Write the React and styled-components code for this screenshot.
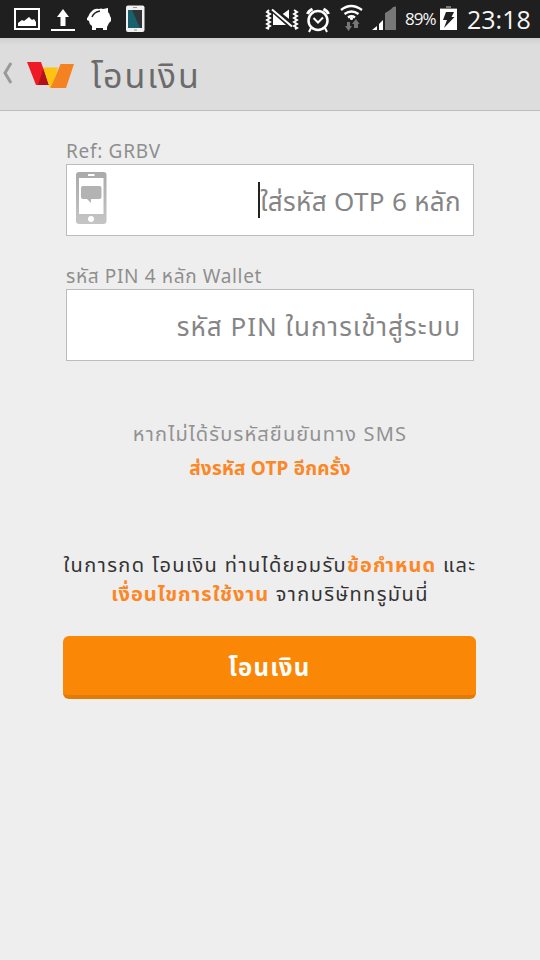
import React from "react";
import styled, { createGlobalStyle } from "styled-components";

const Global = createGlobalStyle`
  * { box-sizing: border-box; }
  html, body { margin: 0; padding: 0; background: #eeeeee; }
  body { font-family: "Noto Sans", "Noto Sans Thai", "Liberation Sans", sans-serif; }
`;

const Screen = styled.div`
  width: 540px;
  height: 960px;
  overflow: hidden;
  display: flex;
  flex-direction: column;
  background: #eeeeee;
`;

const StatusBar = styled.header`
  height: 38px;
  flex: none;
  display: flex;
  justify-content: space-between;
  background: #1f1f1f;
`;

const Drawing = styled.svg`
  display: block;
  flex: none;
`;

const StatusInfo = styled.div`
  display: flex;
  align-items: center;
  height: 38px;
`;

const StatusText = styled.span`
  display: block;
  flex: none;
  width: ${(p) => p.$width}px;
  margin: 0 ${(p) => p.$after}px 0 ${(p) => p.$before}px;
  color: #f6f6f6;
  font-family: "Open Sans", "Noto Sans", sans-serif;
  font-size: ${(p) => p.$size}px;
  line-height: ${(p) => p.$line || 38}px;
  letter-spacing: ${(p) => p.$spacing}px;
  white-space: nowrap;
`;

const ActionBar = styled.nav`
  height: 73px;
  flex: none;
  display: flex;
  align-items: flex-start;
  background: linear-gradient(#cfcfcf 0, #dddddd 7px, #dddddd 100%);
  border-bottom: 1px solid #bdbdbd;
`;

const Title = styled.h1`
  margin: 0 0 0 11px;
  color: #6b6b6b;
  font-size: 34px;
  font-weight: 400;
  line-height: 75px;
  letter-spacing: 1.9px;
  white-space: nowrap;
`;

const Form = styled.main`
  display: flex;
  flex-direction: column;
  width: 408px;
  margin: 27px 0 0 66px;
`;

const Label = styled.label`
  height: 26px;
  color: #8e8e8e;
  font-size: 19px;
  line-height: 26px;
  letter-spacing: ${(p) => p.$spacing || 0}px;
  white-space: nowrap;
`;

const Field = styled.div`
  height: 72px;
  margin-bottom: 27px;
  padding: 0 12px 0 9px;
  display: flex;
  align-items: flex-start;
  background: #ffffff;
  border: 1px solid #bcbcbc;
`;

const FieldIcon = styled.div`
  margin-top: 7px;
`;

const Placeholder = styled.span`
  height: 36px;
  margin: 17px 0 0 auto;
  color: #858585;
  font-size: 26px;
  line-height: 38px;
  letter-spacing: ${(p) => p.$spacing || 0}px;
  white-space: nowrap;
  border-left: ${(p) => (p.$caret ? "2px solid #222222" : "0")};
`;

const Message = styled.p`
  margin: ${(p) => p.$top || 0}px 0 0;
  color: ${(p) => p.$color || "#929292"};
  font-size: ${(p) => (p.$bold ? 19 : 20)}px;
  font-weight: ${(p) => (p.$bold ? 700 : 400)};
  line-height: 34px;
  letter-spacing: ${(p) => p.$spacing || 0}px;
  text-align: center;
  white-space: nowrap;
`;

const Terms = styled.p`
  margin: 65px -10px 0;
  color: #333333;
  font-size: 20px;
  line-height: 29px;
  letter-spacing: 1.4px;
  text-align: center;
  white-space: nowrap;
`;

const Link = styled.a`
  color: #fb8726;
  font-weight: 700;
  letter-spacing: 1.05px;
`;

const Submit = styled.button`
  width: 413px;
  height: 63px;
  margin: 28px 0 0 -3px;
  padding: 2px 0 0;
  border: 0;
  border-bottom: 4px solid #e27b05;
  border-radius: 6px;
  background: #fa8806;
  color: #ffffff;
  font: 700 24px/57px "Noto Sans", "Noto Sans Thai", sans-serif;
  letter-spacing: 1.2px;
`;

const Notifications = () => (
  <Drawing width="150" height="38" viewBox="0 0 150 38">
    <rect x="15" y="9" width="24" height="20" fill="none" stroke="#fff" strokeWidth="2" />
    <path d="M18 26v-3l4-3 2 1 5-4 3 3 2-1 2 3v4z" fill="#fff" />
    <path d="M63 9l6 8h-3.500v9h-5v-9H57zM51 29h24v2H51z" fill="#fff" />
    <path d="M93 10q3-2 6-1 2-1 4 0l5-1v4q2 2 2 4l1 2v3l-2 2-2 4v3h-4v-2h-7v2h-4v-4q-3-2-3-5l-2-1v-2l1-1q1-4 5-7z" fill="#fff" />
    <path d="M92 17q2-5 8-6" fill="none" stroke="#222" strokeWidth="1.500" />
    <rect x="126" y="5.500" width="18.500" height="26.500" rx="2" fill="#f1f1f1" />
    <path d="M128 10h14v18h-14z" fill="#303437" />
    <path d="M128 10h4l8 18h-12z" fill="#17616f" />
    <path d="M133 7.500h4M134 30h3" stroke="#999" />
  </Drawing>
);

const Signals = () => (
  <Drawing width="140" height="38" viewBox="260 0 140 38">
    <path d="M273 13.500l13 11.500h-13zM282 14.500l7-5v16z" fill="#fff" />
    <path d="M273 9.500l19 15" stroke="#1f1f1f" strokeWidth="5" />
    <g fill="none" stroke="#fff" strokeWidth="2">
      <path d="M269 10l-2 2 3 2-3 2 3 2-3 2 3 2-3 2 3 2-3 2 2 1M294 10l3 2-3 2 3 2-3 2 3 2-3 2 3 2-3 2 3 2-2 1" />
      <path d="M272 9.500l20 17" />
      <circle cx="318" cy="20.500" r="9.500" strokeWidth="2.500" />
      <path d="M313.500 18l4.500 4.500 5-5M311 28l-2 4M325 28l2 4" />
      <path d="M307.500 14q1-3 5-5M323.500 9q4 2 5 5" strokeWidth="3" />
      <path d="M341 10q10-8 21 0M344.500 14q7-5 14 0M348 17.500q3.500-2.500 7 0" strokeWidth="2.300" />
    </g>
    <circle cx="351.500" cy="18.500" r="1.600" fill="#fff" />
    <path d="M347 22h3v4h2l-3.500 5-3.500-5h2zM354 28v-4h-2l4-5 3.500 5H358v4z" fill="#777" />
    <path d="M372 30l5-4v4zM379 24l4-4v10h-4z" fill="#fff" />
    <path d="M385 18V13q7-4 8-6l3-.5V30h-11z" fill="#777" />
  </Drawing>
);

const Battery = () => (
  <Drawing width="17" height="38" viewBox="440 0 17 38">
    <path d="M440 8h17v22h-17z" fill="#fff" />
    <path d="M446 6h5v2h6v1h-17V8h6z" fill="#777" />
    <path d="M446 12h8l-2.500 5h3L444 28l3-8h-4z" fill="#1f1f1f" />
  </Drawing>
);

const Brand = () => (
  <Drawing width="80" height="72" viewBox="0 38 80 72">
    <path d="M11 63L5 73L11 83" fill="none" stroke="#999" strokeWidth="3" />
    <path d="M27 62h14l8 23H36z" fill="#ed1c24" />
    <path d="M43.500 68l5 17H38z" fill="#b1121a" />
    <path d="M43 67.500h15L52 88h-2z" fill="#ffc20e" />
    <path d="M60.500 64H74l-8 24H50.500l3.500-8z" fill="#f58220" />
  </Drawing>
);

const MessagePhone = () => (
  <Drawing width="31" height="52" viewBox="0 0 31 52">
    <defs>
      <linearGradient id="phone" x2="0" y2="1">
        <stop stopColor="#aaa" />
        <stop offset="1" stopColor="#c5c5c5" />
      </linearGradient>
    </defs>
    <rect width="30.500" height="52" rx="3" fill="url(#phone)" />
    <path d="M3 6h24.500v36H3zM12 2h6.500v2H12z" fill="#fff" />
    <circle cx="15" cy="47" r="3" fill="#fff" />
    <path d="M7 14h16.500q2 0 2 2v9q0 2-2 2H15v4l-4-4H7q-2 0-2-2v-9q0-2 2-2z" fill="#b3b3b3" />
  </Drawing>
);

export default function App() {
  return (
    <Screen>
      <Global />
      <StatusBar>
        <Notifications />
        <StatusInfo>
          <Signals />
          <StatusText $size={17} $line={40} $width={30} $before={5} $after={5} $spacing={-1}>89%</StatusText>
          <Battery />
          <StatusText $size={25} $line={36} $width={64} $before={10} $after={9} $spacing={0}>23:18</StatusText>
        </StatusInfo>
      </StatusBar>
      <ActionBar>
        <Brand />
        <Title>โอนเงิน</Title>
      </ActionBar>
      <Form>
        <Label $spacing={0.7}>Ref: GRBV</Label>
        <Field>
          <FieldIcon>
            <MessagePhone />
          </FieldIcon>
          <Placeholder $caret $spacing={0.35}>ใส่รหัส OTP 6 หลัก</Placeholder>
        </Field>
        <Label $spacing={0.65}>รหัส PIN 4 หลัก Wallet</Label>
        <Field>
          <Placeholder $spacing={1.03}>รหัส PIN ในการเข้าสู่ระบบ</Placeholder>
        </Field>
        <Message $top={29} $spacing={1.15}>หากไม่ได้รับรหัสยืนยันทาง SMS</Message>
        <Message $bold $color="#fb8726" $spacing={0.2}>ส่งรหัส OTP อีกครั้ง</Message>
        <Terms>
          ในการกด โอนเงิน ท่านได้ยอมรับ<Link>ข้อกำหนด</Link> และ
          <br />
          <Link>เงื่อนไขการใช้งาน</Link> จากบริษัททรูมันนี่
        </Terms>
        <Submit>โอนเงิน</Submit>
      </Form>
    </Screen>
  );
}
